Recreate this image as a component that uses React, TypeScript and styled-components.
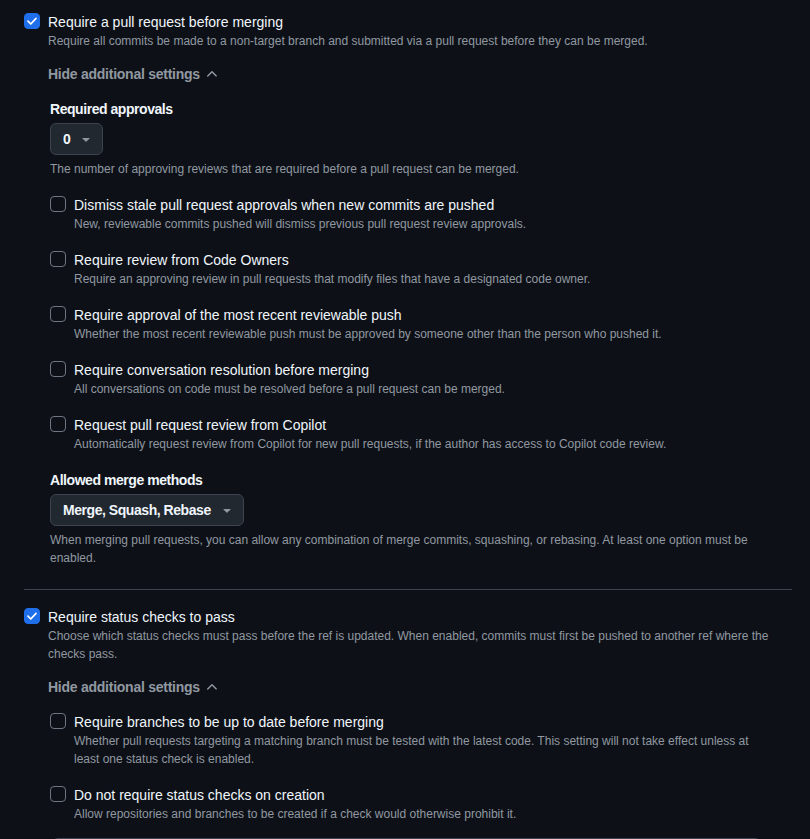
import styled, { createGlobalStyle } from "styled-components";

const GlobalStyle = createGlobalStyle`
  html, body {
    margin: 0;
    background: #0d1117;
  }
  body {
    font-family: "Liberation Sans", "Noto Sans", sans-serif;
    color: #f0f6fc;
    -webkit-font-smoothing: antialiased;
  }
`;

const Page = styled.div`
  padding: 12px 18px 40px 24px;
  display: flex;
  flex-direction: column;
`;

const CheckRow = styled.div<{ $top?: number }>`
  display: grid;
  grid-template-columns: 16px 1fr;
  column-gap: 8px;
  margin-top: ${(p) => p.$top ?? 0}px;
`;

const Box = styled.span<{ $checked?: boolean }>`
  width: 16px;
  height: 16px;
  margin-top: 1px;
  box-sizing: border-box;
  border-radius: 4px;
  display: flex;
  align-items: center;
  justify-content: center;
  background: ${(p) => (p.$checked ? "#1f6feb" : "transparent")};
  border: 1px solid ${(p) => (p.$checked ? "#1f6feb" : "#6e7681")};
`;

const CheckText = styled.div`
  display: flex;
  flex-direction: column;
  min-width: 0;
`;

const Title = styled.div`
  font-size: 14px;
  line-height: 20px;
  color: #f0f6fc;
`;

const Desc = styled.div<{ $top?: number }>`
  font-size: 12px;
  line-height: 18px;
  color: #9198a1;
  margin-top: ${(p) => p.$top ?? 0}px;
`;

const Toggle = styled.div`
  display: flex;
  align-items: center;
  gap: 4px;
  margin-top: 14px;
  font-size: 14px;
  line-height: 20px;
  font-weight: 600;
  letter-spacing: -0.25px;
  color: #9198a1;
  svg {
    fill: #9198a1;
  }
`;

const Nested = styled.div`
  margin-left: 2px;
  padding-right: 20px;
  display: flex;
  flex-direction: column;
`;

const Label = styled.div<{ $top?: number }>`
  font-size: 14px;
  line-height: 20px;
  font-weight: 600;
  letter-spacing: -0.45px;
  color: #f0f6fc;
  margin-top: ${(p) => p.$top ?? 0}px;
`;

const Select = styled.button`
  align-self: flex-start;
  margin-top: 4px;
  height: 32px;
  display: flex;
  align-items: center;
  gap: 8px;
  padding: 0 8px 0 12px;
  background: #212830;
  border: 1px solid #3d444d;
  border-radius: 6px;
  font-family: inherit;
  font-size: 14px;
  font-weight: 600;
  letter-spacing: -0.45px;
  color: #f0f6fc;
  svg {
    fill: #9198a1;
  }
`;

const Divider = styled.hr`
  margin: 22px 0 0;
  border: 0;
  border-top: 1px solid #3d444d;
`;

const NextPanel = styled.div`
  margin: 15px 0 0 28px;
  width: 707px;
  height: 60px;
  border: 1px solid #3d444d;
  border-radius: 6px;
`;

const CheckIcon = () => (
  <svg width="12" height="12" viewBox="0 0 12 12">
    <path d="M2 6.2 4.8 9 10 3.4" fill="none" stroke="#ffffff" strokeWidth="1.7" strokeLinecap="round" strokeLinejoin="round" />
  </svg>
);

const ChevronUp = () => (
  <svg width="16" height="16" viewBox="0 0 16 16">
    <path d="M3.22 10.53a.749.749 0 0 1 0-1.06l4.25-4.25a.749.749 0 0 1 1.06 0l4.25 4.25a.749.749 0 0 1-1.042 1.018.749.749 0 0 1-.018-.018L8 6.811 4.28 10.53a.751.751 0 0 1-1.06 0Z" />
  </svg>
);

const Caret = () => (
  <svg width="16" height="16" viewBox="0 0 16 16">
    <path d="m4.427 7.427 3.396 3.396a.25.25 0 0 0 .354 0l3.396-3.396A.25.25 0 0 0 11.396 7H4.604a.25.25 0 0 0-.177.427Z" />
  </svg>
);

type CheckProps = {
  title: string;
  desc: string;
  checked?: boolean;
  top?: number;
};

function Check({ title, desc, checked, top }: CheckProps) {
  return (
    <CheckRow $top={top}>
      <Box $checked={checked}>{checked && <CheckIcon />}</Box>
      <CheckText>
        <Title>{title}</Title>
        <Desc>{desc}</Desc>
      </CheckText>
    </CheckRow>
  );
}

const prOptions = [
  {
    title: "Dismiss stale pull request approvals when new commits are pushed",
    desc: "New, reviewable commits pushed will dismiss previous pull request review approvals.",
  },
  {
    title: "Require review from Code Owners",
    desc: "Require an approving review in pull requests that modify files that have a designated code owner.",
  },
  {
    title: "Require approval of the most recent reviewable push",
    desc: "Whether the most recent reviewable push must be approved by someone other than the person who pushed it.",
  },
  {
    title: "Require conversation resolution before merging",
    desc: "All conversations on code must be resolved before a pull request can be merged.",
  },
  {
    title: "Request pull request review from Copilot",
    desc: "Automatically request review from Copilot for new pull requests, if the author has access to Copilot code review.",
  },
];

const statusOptions = [
  {
    title: "Require branches to be up to date before merging",
    desc: "Whether pull requests targeting a matching branch must be tested with the latest code. This setting will not take effect unless at least one status check is enabled.",
  },
  {
    title: "Do not require status checks on creation",
    desc: "Allow repositories and branches to be created if a check would otherwise prohibit it.",
  },
];

export default function App() {
  return (
    <>
      <GlobalStyle />
      <Page>
        <Check
          checked
          title="Require a pull request before merging"
          desc="Require all commits be made to a non-target branch and submitted via a pull request before they can be merged."
        />
        <CheckRow>
          <span />
          <CheckText>
            <Toggle>
              Hide additional settings <ChevronUp />
            </Toggle>
            <Nested>
              <Label $top={15}>Required approvals</Label>
              <Select>
                0 <Caret />
              </Select>
              <Desc $top={5}>The number of approving reviews that are required before a pull request can be merged.</Desc>
              {prOptions.map((o) => (
                <Check key={o.title} title={o.title} desc={o.desc} top={17} />
              ))}
              <Label $top={17}>Allowed merge methods</Label>
              <Select>
                Merge, Squash, Rebase <Caret />
              </Select>
              <Desc $top={5}>
                When merging pull requests, you can allow any combination of merge commits, squashing, or rebasing. At least one option must be enabled.
              </Desc>
            </Nested>
          </CheckText>
        </CheckRow>

        <Divider />

        <Check
          checked
          top={17}
          title="Require status checks to pass"
          desc="Choose which status checks must pass before the ref is updated. When enabled, commits must first be pushed to another ref where the checks pass."
        />
        <CheckRow>
          <span />
          <CheckText>
            <Toggle>
              Hide additional settings <ChevronUp />
            </Toggle>
            <Nested>
              {statusOptions.map((o, i) => (
                <Check key={o.title} title={o.title} desc={o.desc} top={i === 0 ? 15 : 17} />
              ))}
            </Nested>
          </CheckText>
        </CheckRow>
        <NextPanel />
      </Page>
    </>
  );
}
